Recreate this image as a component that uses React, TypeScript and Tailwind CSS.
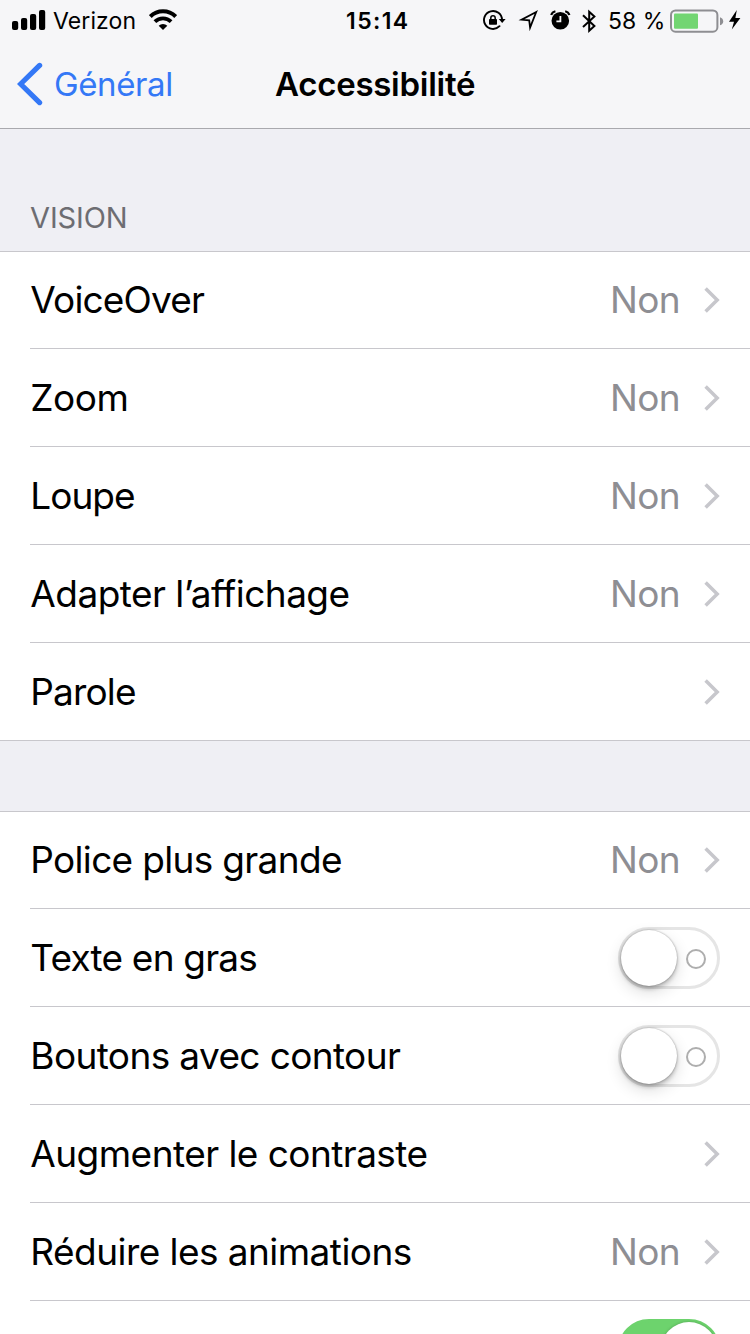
import type { ReactNode } from "react";
import clsx from "clsx";

type RowData = {
	label: string;
	tracking?: string;
	value?: string;
	toggle?: "on" | "off";
};

const vision: RowData[] = [
	{ label: "VoiceOver", value: "Non", tracking: "tracking-[-0.85px]" },
	{ label: "Zoom", value: "Non", tracking: "tracking-[-0.45px]" },
	{ label: "Loupe", value: "Non", tracking: "tracking-[-1px]" },
	{ label: "Adapter l’affichage", value: "Non", tracking: "tracking-[-0.54px]" },
	{ label: "Parole", tracking: "tracking-[-0.85px]" },
];

const display: RowData[] = [
	{ label: "Police plus grande", value: "Non", tracking: "tracking-[-0.67px]" },
	{ label: "Texte en gras", toggle: "off", tracking: "tracking-[-0.8px]" },
	{ label: "Boutons avec contour", toggle: "off", tracking: "tracking-[-0.62px]" },
	{ label: "Augmenter le contraste", tracking: "tracking-[-0.55px]" },
	{ label: "Réduire les animations", value: "Non", tracking: "tracking-[-0.55px]" },
	{ label: "", toggle: "on" },
];

const Signal = () => (
	<svg className="w-[34px] h-[22px]" viewBox="0 0 34 22">
		<rect x="0" y="12" width="6.2" height="9" rx="2" />
		<rect x="9" y="9" width="6.2" height="12" rx="2" />
		<rect x="18" y="5" width="6.2" height="16" rx="2" />
		<rect x="27" y="1" width="6.2" height="20" rx="2" />
	</svg>
);

const Wifi = () => (
	<svg className="w-[28px] h-[22px]" viewBox="0 0 28 22" fill="none">
		<path d="M1.3 7.6a18 18 0 0 1 25.4 0" stroke="#000" strokeWidth="4" />
		<path d="M5.9 12.6a11.6 11.6 0 0 1 16.2 0" stroke="#000" strokeWidth="3.8" />
		<path d="M14 21l-4.3-4.3a6.2 6.2 0 0 1 8.6 0z" fill="#000" />
	</svg>
);

const RotationLock = () => (
	<svg className="w-[24px] h-[22px]" viewBox="0 0 24 22" fill="none">
		<path
			d="M20 11A9 9 0 1 0 17.5 17.2"
			stroke="#000"
			strokeWidth="1.9"
			strokeLinecap="round"
		/>
		<path d="M16.8 10h6.8l-3.4 4z" fill="#000" />
		<rect x="7" y="10" width="8" height="5.8" rx="0.8" fill="#000" />
		<path d="M8.8 10.5V8.9a2.2 2.2 0 0 1 4.4 0v1.6" stroke="#000" strokeWidth="1.5" />
	</svg>
);

const Location = () => (
	<svg className="w-[20px] h-[22px]" viewBox="0 0 20 22" fill="none">
		<path
			d="M18.2 3L3.6 10.6l7.6.8.9 7.2z"
			stroke="#000"
			strokeWidth="1.8"
			strokeLinejoin="miter"
			strokeMiterlimit="6"
		/>
	</svg>
);

const Alarm = () => (
	<svg className="w-[22px] h-[22px]" viewBox="0 0 22 22" fill="none">
		<circle cx="11.3" cy="11.7" r="8.8" fill="#000" />
		<path d="M2.2 6Q3.2 3 6.4 2.2" stroke="#000" strokeWidth="2.2" />
		<path d="M20.4 6Q19.4 3 16.2 2.2" stroke="#000" strokeWidth="2.2" />
		<path d="M11.4 7v5.4H7.4" stroke="#f6f6f8" strokeWidth="1.8" />
	</svg>
);

const Bluetooth = () => (
	<svg className="w-[14px] h-[24px] mt-px" viewBox="0 0 14 24" fill="none">
		<path
			d="M1 6.3L12.4 17 7.2 21.7V2.7l5.2 4.8L1 18.1"
			stroke="#000"
			strokeWidth="2"
		/>
	</svg>
);

const Battery = () => (
	<svg className="w-[54px] h-[24px] mt-px" viewBox="0 0 54 24">
		<rect x="1" y="1.5" width="46.4" height="21.2" rx="4.5" fill="none" stroke="#8e8e92" strokeWidth="2" />
		<rect x="4" y="4.5" width="24" height="15.2" rx="1" fill="#72d572" />
		<path d="M50 8.3q3.2 1 3.2 4t-3.2 4z" fill="#8e8e92" />
	</svg>
);

const Bolt = () => (
	<svg className="w-[12px] h-[20px]" viewBox="0 0 12 20">
		<path d="M7.8 0L0 11.8h5L2.8 19.6 11.4 8H6.4z" />
	</svg>
);

const Disclosure = () => (
	<svg className="w-[16px] h-[28px]" viewBox="0 0 16 28" fill="none">
		<path d="M1.6 2.4L13.2 14 1.6 25.6" stroke="#c7c7cc" strokeWidth="3.5" />
	</svg>
);

const Switch = ({ on }: { on: boolean }) => (
	<div
		className={clsx(
			"flex items-center w-[102px] h-[62px] rounded-full border-[3px]",
			on
				? "justify-end bg-[#6dd36d] border-[#6dd36d]"
				: "justify-between bg-white border-[#e5e5e5] pr-[11px]"
		)}>
		<div
			className={clsx(
				"size-[56px] shrink-0 rounded-full bg-white",
				on
					? "shadow-[0_0_3px_rgba(0,0,0,0.25)]"
					: "shadow-[0_0_2px_rgba(0,0,0,0.35),0_3px_4px_rgba(0,0,0,0.22),0_6px_16px_rgba(0,0,0,0.14)]"
			)}
		/>
		{!on && (
			<div className="size-[20px] mt-0.5 rounded-full border-2 border-[#aeaeae]" />
		)}
	</div>
);

const Row = ({ row, first, last }: { row: RowData; first: boolean; last: boolean }) => (
	<li className={clsx("h-[98px] shrink-0", !last && "pl-[30px]")}>
		<div
			className={clsx(
				"flex items-center justify-between h-full pr-[30px] border-[#c8c7cc] border-b",
				last && "pl-[30px]",
				first && "pt-px"
			)}>
			<span className={clsx("ml-[0.3px] text-[37px] leading-[48px] text-black whitespace-nowrap", row.tracking)}>
				{row.label}
			</span>
			{row.toggle ? (
				<Switch on={row.toggle === "on"} />
			) : (
				<div className="flex items-center gap-6">
					{row.value && (
						<span className="text-[37px] leading-[48px] tracking-[-0.6px] text-[#8e8e93]">
							{row.value}
						</span>
					)}
					<Disclosure />
				</div>
			)}
		</div>
	</li>
);

const Group = ({ rows, children }: { rows: RowData[]; children?: ReactNode }) => (
	<section>
		{children}
		<ul className="bg-white shadow-[inset_0_1px_0_#c8c7cc]">
			{rows.map((row, index) => (
				<Row
					key={`row-${index}`}
					row={row}
					first={index === 0}
					last={index === rows.length - 1}
				/>
			))}
		</ul>
	</section>
);

const StatusBar = () => (
	<div className="grid grid-cols-[346px_1fr_268px] items-center h-10 text-[23px] leading-[30px]">
		<div className="flex items-center pl-3">
			<Signal />
			<span className="ml-[7px] mt-0.5 w-[84px] tracking-[0.1px]">Verizon</span>
			<span className="ml-3">
				<Wifi />
			</span>
		</div>
		<span className="pt-0.5 font-semibold tracking-[1.4px]">15:14</span>
		<div className="flex items-center">
			<RotationLock />
			<span className="ml-3">
				<Location />
			</span>
			<span className="ml-[11px]">
				<Alarm />
			</span>
			<span className="ml-[11px]">
				<Bluetooth />
			</span>
			<span className="ml-3 mt-0.5 w-[62px] whitespace-nowrap">58 %</span>
			<Battery />
			<span className="ml-[5px]">
				<Bolt />
			</span>
		</div>
	</div>
);

const App = () => {
	return (
		<div className="w-[750px] h-[1334px] overflow-hidden bg-[#efeff4] font-['Inter','Liberation_Sans',sans-serif] text-black">
			<header className="h-[129px] bg-[#f6f6f8] border-b border-[#a9a9ae]">
				<StatusBar />
				<nav className="grid grid-cols-[275px_1fr] items-center h-[88px]">
					<a className="flex items-center pl-[17px] text-[#3478f6]">
						<svg className="w-[26px] h-[44px]" viewBox="0 0 26 44" fill="none">
							<path
								d="M22.6 3.4L3.6 22l19 18.6"
								stroke="#3478f6"
								strokeWidth="5.2"
								strokeLinecap="round"
							/>
						</svg>
						<span className="ml-[11px] text-[33px] leading-[44px] tracking-[-0.4px]">Général</span>
					</a>
					<h1 className="text-[33px] leading-[44px] font-semibold tracking-[-0.27px]">
						Accessibilité
					</h1>
				</nav>
			</header>
			<main>
				<Group rows={vision}>
					<h2 className="h-[122px] pt-[70px] pl-[30px] text-[29px] leading-[38px] tracking-[-0.1px] text-[#6d6d72]">
						VISION
					</h2>
				</Group>
				<div className="h-[70px]" />
				<Group rows={display} />
			</main>
		</div>
	);
};
export default App;
